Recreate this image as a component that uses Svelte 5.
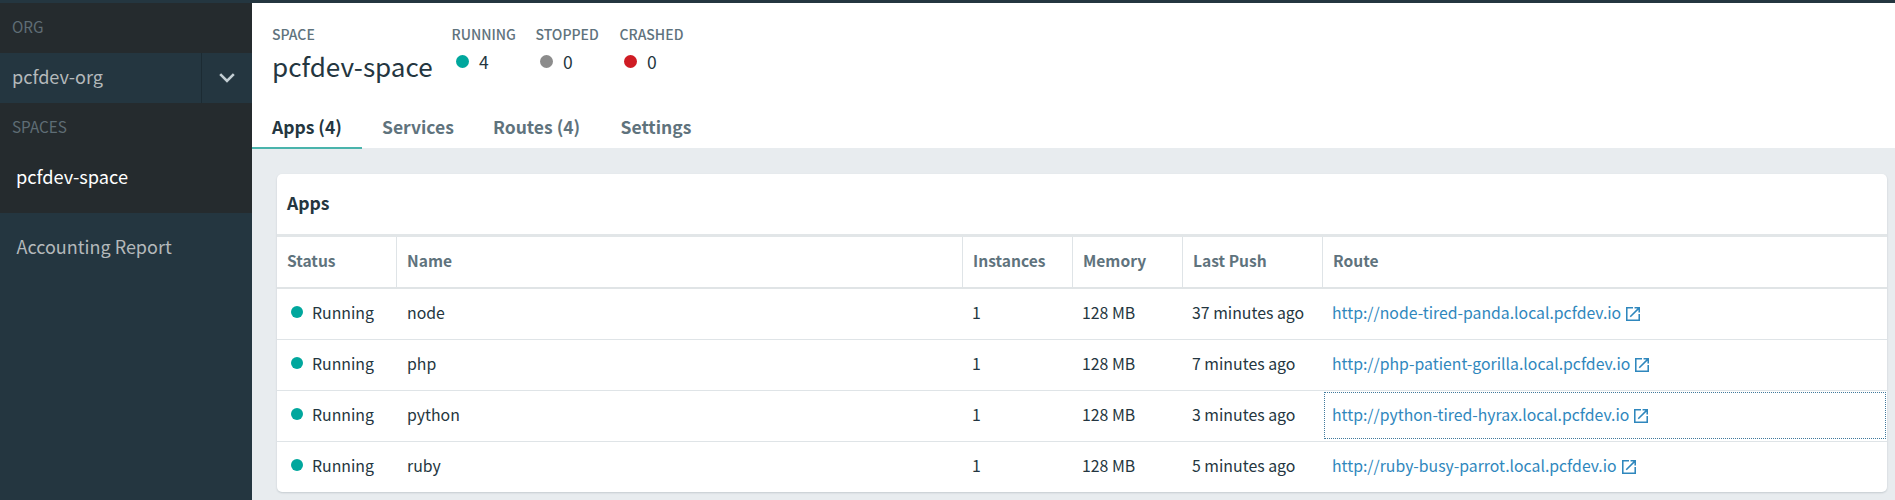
<script>
  const stats = [
    { label: 'RUNNING', value: 4, color: '#00a79d' },
    { label: 'STOPPED', value: 0, color: '#8c8c8c' },
    { label: 'CRASHED', value: 0, color: '#cf1c24' }
  ];
  const tabs = ['Apps (4)', 'Services', 'Routes (4)', 'Settings'];
  const columns = ['Status', 'Name', 'Instances', 'Memory', 'Last Push', 'Route'];
  const apps = [
    { name: 'node', pushed: '37 minutes ago', route: 'http://node-tired-panda.local.pcfdev.io' },
    { name: 'php', pushed: '7 minutes ago', route: 'http://php-patient-gorilla.local.pcfdev.io' },
    { name: 'python', pushed: '3 minutes ago', route: 'http://python-tired-hyrax.local.pcfdev.io', focused: true },
    { name: 'ruby', pushed: '5 minutes ago', route: 'http://ruby-busy-parrot.local.pcfdev.io' }
  ];
</script>

<div class="page">
  <aside>
    <div class="label org-label">ORG</div>
    <div class="org">
      <span>pcfdev-org</span>
      <button aria-label="Choose org">
        <svg width="16" height="10" viewBox="0 0 16 10"><path d="M1.2 1.2 8 8l6.800-6.800" fill="none" stroke="#c3ced3" stroke-width="2.600" /></svg>
      </button>
    </div>
    <div class="spaces">
      <div class="label">SPACES</div>
      <div class="space">pcfdev-space</div>
    </div>
    <div class="report">Accounting Report</div>
  </aside>

  <main>
    <header>
      <div class="summary">
        <div class="current">
          <div class="caption">SPACE</div>
          <h1>pcfdev-space</h1>
        </div>
        {#each stats as s}
          <div class="stat">
            <div class="caption">{s.label}</div>
            <div class="count"><i style:background={s.color}></i>{s.value}</div>
          </div>
        {/each}
      </div>
      <nav>
        {#each tabs as t, i}
          <div class="tab" class:active={i === 0}>{t}</div>
        {/each}
      </nav>
    </header>

    <section class="card">
      <h2>Apps</h2>
      <div class="row head">
        {#each columns as c}<div>{c}</div>{/each}
      </div>
      {#each apps as app}
        <div class="row">
          <div class="status"><i></i>Running</div>
          <div>{app.name}</div>
          <div class="num">1</div>
          <div class="num">128 MB</div>
          <div class="num">{app.pushed}</div>
          <div class="route" class:focused={app.focused}>
            <span>{app.route}</span>
            <svg width="14" height="14" viewBox="3 3 18 18"><path fill="currentColor" d="M19 19H5V5h7V3H3v18h18v-9h-2v7zM14 3v2h3.590l-9.830 9.830 1.410 1.410L19 6.410V10h2V3h-7z" /></svg>
          </div>
        </div>
      {/each}
    </section>
  </main>
</div>

<style>
  :global(body) { margin: 0; overflow: hidden; }
  .page {
    box-sizing: border-box;
    display: flex;
    height: 500px;
    border-top: 3px solid #243640;
    background: #e8ecef;
    color: #243640;
    font-family: "Noto Sans CJK SC", "Open Sans", sans-serif;
    white-space: nowrap;
  }
  aside { width: 252px; flex: none; background: #243640; color: #b4b9bb; font-size: 18.1px; }
  .label { padding-left: 12px; font-size: 15.3px; line-height: 46px; color: #5f6d75; }
  .org-label { height: 50px; background: #252b2e; }
  .org { display: flex; height: 50px; line-height: 46px; }
  .org span { width: 189px; padding-left: 12px; border-right: 1px solid #1c2b33; }
  .org button { flex: 1; display: flex; align-items: center; justify-content: center; padding: 0; border: 0; background: none; }
  .spaces { height: 110px; background: #252b2e; }
  .space { padding-left: 16px; line-height: 54px; font-size: 18.2px; color: #fff; }
  .report { padding-left: 16.500px; line-height: 66px; font-size: 18px; }

  main { flex: 1; }
  header { height: 145px; background: #fff; }
  .summary { display: flex; height: 81px; padding: 22px 0 0 20px; }
  .current { width: 179.500px; }
  .stat { width: 84px; }
  .caption { font-size: 14px; line-height: 19px; font-weight: 500; color: #5f737d; }
  h1 { margin: 0; font-size: 26.1px; font-weight: 400; line-height: 44px; }
  .count { display: flex; align-items: center; gap: 10px; height: 35px; padding-left: 4.500px; font-size: 17.5px; line-height: 35px; }
  .count i { width: 13px; height: 13px; border-radius: 50%; }
  nav { display: grid; grid-template-columns: 110px 111px 127.500px 120px; }
  .tab { padding-left: 20px; line-height: 41px; font-size: 17.5px; font-weight: 700; color: #5f737d; border-bottom: 2px solid transparent; }
  .active { color: #243640; border-color: #4ab4ac; }

  .card { width: 1610px; height: 318px; margin: 26px 0 0 25px; background: #fff; border-radius: 5px; box-shadow: 0 1px 2px rgba(36, 54, 64, .18); }
  h2 { height: 60px; margin: 0; padding-left: 10px; font-size: 17.6px; line-height: 58px; font-weight: 700; border-bottom: 3px solid #e2e6e8; }
  .row { display: grid; grid-template-columns: 120px 566px 110px 110px 140px 1fr; height: 50px; line-height: 48px; font-size: 15.85px; border-bottom: 1px solid #dfe4e7; }
  .row:last-child { border-bottom: 0; }
  .row > div { padding-left: 10px; }
  .row > .num { padding-left: 9px; }
  .head { border-bottom: 2px solid #e0e4e6; font-size: 15.6px; line-height: 47px; font-weight: 700; color: #5f737d; }
  .head > div { border-right: 1px solid #dfe4e7; }
  .head > div:last-child { border-right: 0; }
  .row .status { display: flex; align-items: center; gap: 9px; height: 48px; padding-left: 14px; }
  .status i { width: 12px; height: 12px; margin-bottom: 2px; border-radius: 50%; background: #00a79d; }
  .row .route { box-sizing: border-box; display: flex; align-items: center; gap: 5px; height: 49px; padding: 0 0 1px 9px; color: #2f87bd; font-size: 15.8px; }
  .route svg { margin-top: 1px; }
  .focused { outline: 1px dotted #40799c; outline-offset: -2px; }
</style>
